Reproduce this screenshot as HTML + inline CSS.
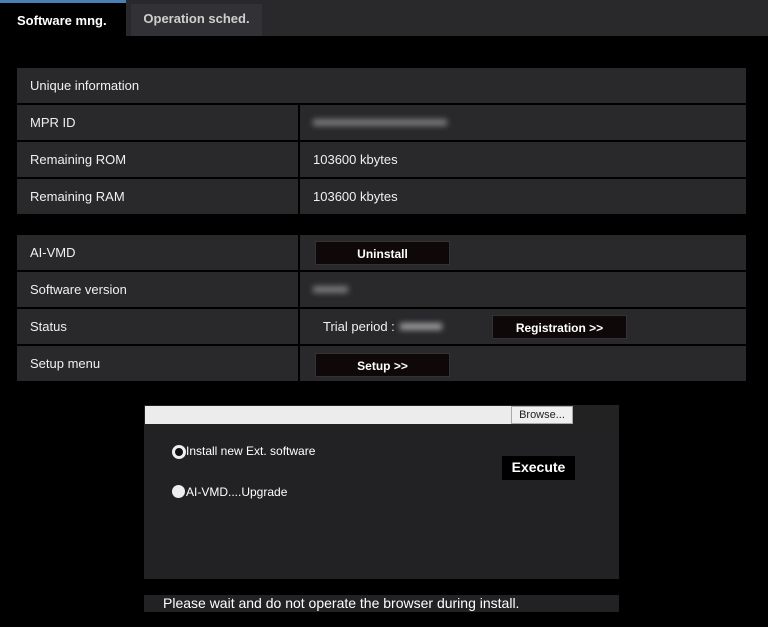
<!DOCTYPE html>
<html><head><style>
body{margin:0;width:768px;height:627px;background:#000;font-family:"Liberation Sans",Arial,sans-serif;position:relative;overflow:hidden;color:#fff}
.a{position:absolute}
.bar{left:0;top:0;width:768px;height:36px;background:#29292c}
.tab1{left:0;top:0;width:126px;height:36px;background:#000;border-top:3px solid #4a7fb5;box-sizing:border-box;font-weight:bold;font-size:13px;line-height:36px;padding-left:17px}
.tab2{left:131px;top:4px;width:131px;height:32px;background:#323236;font-weight:bold;font-size:13px;line-height:30px;color:#cfcfcf;text-align:center}
.c{background:#29292c;font-size:13px;line-height:35px;height:35px;color:#f0f0f0;box-sizing:border-box;padding-left:13px}
.btn{background:#0e0808;font-size:12px;font-weight:bold;text-align:center;color:#fff;line-height:24px;height:24px;border:1px solid #333;box-sizing:border-box}
.blur{background:#777;filter:blur(3px);height:7px}
</style></head><body>
<div class="a bar"></div>
<div class="a tab1">Software mng.</div>
<div class="a tab2">Operation sched.</div>

<div class="a c" style="left:17px;top:68px;width:729px">Unique information</div>
<div class="a c" style="left:17px;top:105px;width:281px">MPR ID</div>
<div class="a c" style="left:300px;top:105px;width:446px"></div>
<div class="a blur" style="left:313px;top:119px;width:134px"></div>
<div class="a c" style="left:17px;top:142px;width:281px">Remaining ROM</div>
<div class="a c" style="left:300px;top:142px;width:446px">103600 kbytes</div>
<div class="a c" style="left:17px;top:179px;width:281px">Remaining RAM</div>
<div class="a c" style="left:300px;top:179px;width:446px">103600 kbytes</div>

<div class="a c" style="left:17px;top:235px;width:281px">AI-VMD</div>
<div class="a c" style="left:300px;top:235px;width:446px"></div>
<div class="a c" style="left:17px;top:272px;width:281px">Software version</div>
<div class="a c" style="left:300px;top:272px;width:446px"></div>
<div class="a blur" style="left:313px;top:286px;width:35px"></div>
<div class="a c" style="left:17px;top:309px;width:281px">Status</div>
<div class="a c" style="left:300px;top:309px;width:446px;padding-left:23px">Trial period :</div>
<div class="a blur" style="left:400px;top:323px;width:42px;background:#999"></div>
<div class="a c" style="left:17px;top:346px;width:281px">Setup menu</div>
<div class="a c" style="left:300px;top:346px;width:446px"></div>

<div class="a btn" style="left:315px;top:241px;width:135px">Uninstall</div>
<div class="a btn" style="left:492px;top:315px;width:135px">Registration &gt;&gt;</div>
<div class="a btn" style="left:315px;top:353px;width:135px">Setup &gt;&gt;</div>

<div class="a" style="left:144px;top:405px;width:475px;height:22px;background:#222"></div>
<div class="a" style="left:145px;top:406px;width:366px;height:18px;background:#ececec"></div>
<div class="a" style="left:511px;top:406px;width:62px;height:18px;background:#efefef;border:1px solid #aaa;box-sizing:border-box;color:#222;font-size:11px;text-align:center;line-height:16px">Browse...</div>
<div class="a" style="left:144px;top:427px;width:475px;height:152px;background:#222224"></div>
<div class="a" style="left:172px;top:445px;width:8px;height:8px;border-radius:50%;background:#111;border:3px solid #eee"></div>
<div class="a" style="left:186px;top:444px;font-size:12px">Install new Ext. software</div>
<div class="a" style="left:172px;top:485px;width:13px;height:13px;border-radius:50%;background:#eee"></div>
<div class="a" style="left:186px;top:485px;font-size:12px">AI-VMD....Upgrade</div>
<div class="a" style="left:502px;top:456px;width:73px;height:24px;background:#000;font-weight:bold;font-size:14px;text-align:center;line-height:22px">Execute</div>
<div class="a" style="left:144px;top:595px;width:475px;height:17px;background:#222224;font-size:14px;line-height:17px;padding-left:19px;box-sizing:border-box">Please wait and do not operate the browser during install.</div>
</body></html>
